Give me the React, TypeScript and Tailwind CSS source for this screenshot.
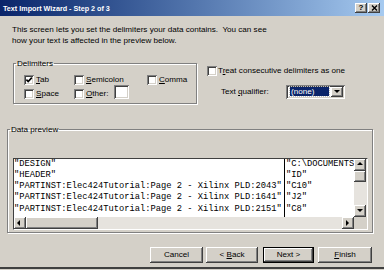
import React from "react";

const RAISED =
  "bg-[#d4d0c8] shadow-[inset_-1px_-1px_0_#404040,inset_1px_1px_0_#ffffff,inset_-2px_-2px_0_#808080]";
const SUNKEN =
  "shadow-[inset_1px_1px_0_#808080,inset_-1px_-1px_0_#ffffff,inset_2px_2px_0_#404040,inset_-2px_-2px_0_#d4d0c8]";

function Check({ checked = false }: { checked?: boolean }) {
  return (
    <span className={`inline-flex h-[10px] w-[10px] shrink-0 items-center justify-center bg-white ${SUNKEN}`}>
      {checked && (
        <svg width="10" height="10" viewBox="0 0 10 10" aria-hidden>
          <path d="M2.4 4.6 L4.2 6.6 L7.8 2.6" fill="none" stroke="#000" strokeWidth="1.6" />
        </svg>
      )}
    </span>
  );
}

function Option({ checked, first, rest }: { checked?: boolean; first: string; rest: string }) {
  return (
    <label className="flex items-center gap-[2px]">
      <Check checked={checked} />
      <span>
        <span className="underline">{first}</span>
        {rest}
      </span>
    </label>
  );
}

function Arrow({ dir }: { dir: "up" | "down" | "left" | "right" }) {
  const pts = {
    up: "2,5 5,2 8,5",
    down: "2,3 5,6 8,3",
    left: "5,2 2,5 5,8",
    right: "3,2 6,5 3,8",
  }[dir];
  return (
    <svg width="10" height="10" viewBox="0 0 10 10" aria-hidden>
      <polygon points={pts} fill="#000" />
    </svg>
  );
}

function ScrollButton({ dir }: { dir: "up" | "down" | "left" | "right" }) {
  return (
    <div className={`flex h-[12px] w-[12px] shrink-0 items-center justify-center ${RAISED}`}>
      <Arrow dir={dir} />
    </div>
  );
}

function Button({
  children,
  className = "",
  isDefault = false,
}: {
  children: React.ReactNode;
  className?: string;
  isDefault?: boolean;
}) {
  return (
    <div className={`h-[16px] shrink-0 ${isDefault ? "border border-black" : ""} ${className}`.trim()}>
      <div className={`flex h-full w-full items-center justify-center ${RAISED}`}>{children}</div>
    </div>
  );
}

const LEFT_ROWS = [
  '"DESIGN"',
  '"HEADER"',
  '"PARTINST:Elec424Tutorial:Page 2 - Xilinx PLD:2043"',
  '"PARTINST:Elec424Tutorial:Page 2 - Xilinx PLD:1641"',
  '"PARTINST:Elec424Tutorial:Page 2 - Xilinx PLD:2151"',
];
const RIGHT_ROWS = ['"C:\\DOCUMENTS', '"ID"', '"C10"', '"J2"', '"C8"'];

export default function App() {
  return (
    <div className="flex h-[270px] w-[384px] flex-col overflow-hidden bg-[#d4d0c8] font-['Liberation_Sans',Arial,sans-serif] text-[8.1px] leading-[11px] text-black">
      <div className="flex h-[269px] flex-col border-b-2 border-[#404040]">
        {/* title bar */}
        <div className="flex h-[16px] shrink-0 items-center bg-linear-to-r from-[#0a246a] to-[#a6caf0] pl-[3px] pr-[4px]">
          <span className="text-[7.2px] font-bold text-white">Text Import Wizard - Step 2 of 3</span>
          <div className="ml-auto flex gap-[1px]">
            <div className={`flex h-[10px] w-[12px] items-center justify-center text-[8px] font-bold leading-none ${RAISED}`}>?</div>
            <div className={`flex h-[10px] w-[12px] items-center justify-center ${RAISED}`}>
              <svg width="7" height="6" viewBox="0 0 7 6" aria-hidden>
                <path d="M1 0.5 L6 5.5 M6 0.5 L1 5.5" stroke="#000" strokeWidth="1.4" />
              </svg>
            </div>
          </div>
        </div>

        <p className="ml-[12px] mt-[8px] whitespace-pre">
          {"This screen lets you set the delimiters your data contains.  You can see\nhow your text is affected in the preview below."}
        </p>

        <div className="mt-[12px] flex items-start">
          <fieldset className="ml-[13px] h-[46px] w-[184px] border border-[#808080] shadow-[1px_1px_0_#ffffff,inset_1px_1px_0_#ffffff]">
            <legend className="ml-[2px] px-[1px]">Delimiters</legend>
            <div className="grid grid-cols-[50px_73px_1fr] grid-rows-[10px_14px] items-end pl-[10px] pt-[6px]">
              <Option checked first="T" rest="ab" />
              <Option first="S" rest="emicolon" />
              <Option first="C" rest="omma" />
              <Option first="S" rest="pace" />
              <div className="flex items-end">
                <Option first="O" rest="ther:" />
                <div className={`ml-[5px] h-[14px] w-[15px] bg-white ${SUNKEN}`} />
              </div>
              <div />
            </div>
          </fieldset>

          <div className="ml-[10px] mt-[7.5px] flex flex-col">
            <label className="flex h-[10px] items-center gap-[1px]">
              <Check />
              <span>
                T<span className="underline">r</span>eat consecutive delimiters as one
              </span>
            </label>
            <div className="mt-[9px] flex items-center">
              <span className="ml-[14px] w-[65px]">
                Text <span className="underline">q</span>ualifier:
              </span>
              <div className={`flex h-[14px] w-[59px] items-center bg-white p-[2px] ${SUNKEN}`}>
                <div className="flex h-full flex-1 items-center px-[2px]">
                  <span className="h-[9px] flex-1 bg-[#0a246a] pl-[1px] leading-[9px] text-white outline outline-1 outline-dotted outline-[#c0c0c0]">
                    (none)
                  </span>
                </div>
                <div className={`flex h-full w-[12px] items-center justify-center ${RAISED}`}>
                  <Arrow dir="down" />
                </div>
              </div>
            </div>
          </div>
        </div>

        <fieldset className="ml-[7px] mt-[20px] h-[108.5px] w-[366px] border border-[#808080] shadow-[1px_1px_0_#ffffff,inset_1px_1px_0_#ffffff]">
          <legend className="ml-[2px] px-[1px]">Data preview</legend>
          <div className="ml-[5px] mt-[22.5px] flex h-[72px] w-[355px] flex-col border border-[#404040] border-b-white border-r-white">
            <div className="flex h-[59px]">
              <div className="flex flex-1 bg-white font-['Liberation_Mono','Courier_New',monospace] text-[8.75px] leading-[11.25px]">
                <div className="w-[271px] overflow-hidden whitespace-pre border-r border-black">
                  {LEFT_ROWS.map((r) => (
                    <div key={r}>{r}</div>
                  ))}
                </div>
                <div className="flex-1 overflow-hidden whitespace-pre pl-[1px]">
                  {RIGHT_ROWS.map((r) => (
                    <div key={r}>{r}</div>
                  ))}
                </div>
              </div>
              <div className="flex w-[13px] flex-col bg-[#e6e3de]">
                <ScrollButton dir="up" />
                <div className={`h-[11px] w-[12px] ${RAISED}`} />
                <div className="flex-1" />
                <ScrollButton dir="down" />
              </div>
            </div>
            <div className="flex h-[12px]">
              <div className="flex flex-1 bg-[#e6e3de]">
                <ScrollButton dir="left" />
                <div className={`h-[12px] w-[72px] ${RAISED}`} />
                <div className="flex-1" />
                <ScrollButton dir="right" />
              </div>
              <div className="w-[13px] bg-[#d4d0c8]" />
            </div>
          </div>
        </fieldset>

        <div className="mt-[14px] flex">
          <Button className="ml-[150px] w-[53px]">Cancel</Button>
          <Button className="ml-[3px] w-[52px]">
            <span>
              &lt; <span className="underline">B</span>ack
            </span>
          </Button>
          <Button className="ml-[5px] w-[51px]" isDefault>
            Next &gt;
          </Button>
          <Button className="ml-[4px] w-[54px]">
            <span>
              <span className="underline">F</span>inish
            </span>
          </Button>
        </div>
      </div>
    </div>
  );
}
